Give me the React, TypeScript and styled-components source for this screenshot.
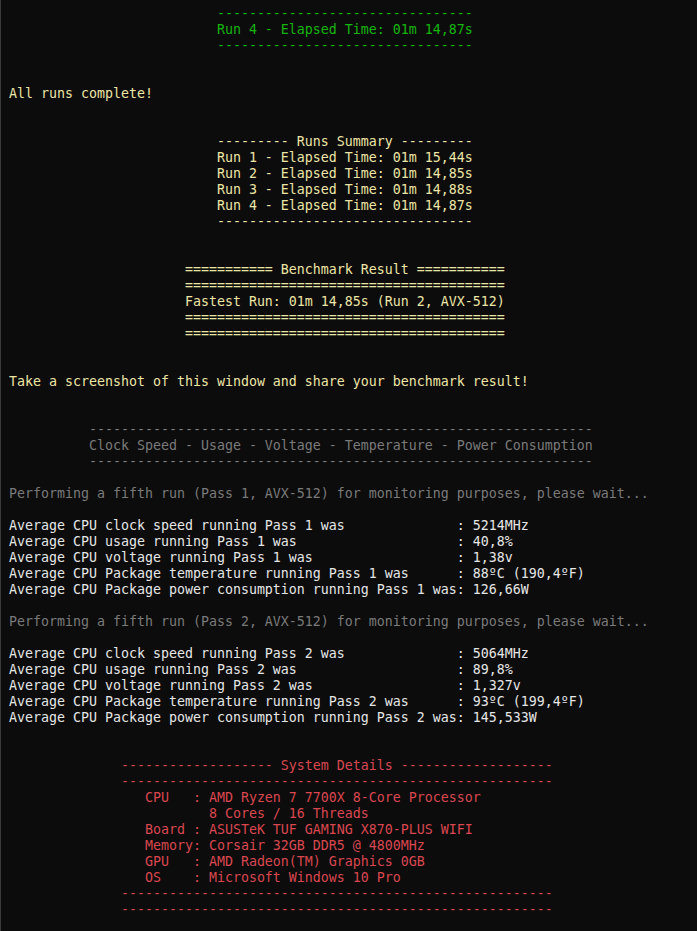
import React from "react";
import styled, { createGlobalStyle } from "styled-components";

type Tone = "green" | "yellow" | "gray" | "white" | "red";

const palette: Record<Tone, string> = {
  green: "#16b50e",
  yellow: "#ece5a6",
  gray: "#7a7a7a",
  white: "#e6e6e6",
  red: "#d9474f",
};

const Global = createGlobalStyle`
  html, body {
    margin: 0;
    padding: 0;
    background: #0c0c0c;
  }
`;

const Terminal = styled.main`
  box-sizing: border-box;
  width: 697px;
  height: 931px;
  overflow: hidden;
  background: #0c0c0c;
  border-left: 1px solid #3c3c3c;
  padding: 6px 0 0 8px;
  display: flex;
  flex-direction: column;
  font-family: "DejaVu Sans Mono", "Liberation Mono", monospace;
  font-size: 13.29px;
  line-height: 16px;
`;

const Line = styled.div<{ $tone: Tone }>`
  height: 16px;
  white-space: pre;
  color: ${(p) => palette[p.$tone]};
`;

const sp = (n: number) => " ".repeat(n);
const rep = (c: string, n: number) => c.repeat(n);

type Row = { text: string; tone: Tone };

const stat = (label: string, value: string): Row => ({
  text: label.padEnd(56, " ") + ": " + value,
  tone: "white",
});

const blank: Row = { text: "", tone: "white" };

const rows: Row[] = [
  { text: sp(26) + rep("-", 32), tone: "green" },
  { text: sp(26) + "Run 4 - Elapsed Time: 01m 14,87s", tone: "green" },
  { text: sp(26) + rep("-", 32), tone: "green" },
  blank,
  blank,
  { text: "All runs complete!", tone: "yellow" },
  blank,
  blank,
  { text: sp(26) + "--------- Runs Summary ---------", tone: "yellow" },
  { text: sp(26) + "Run 1 - Elapsed Time: 01m 15,44s", tone: "yellow" },
  { text: sp(26) + "Run 2 - Elapsed Time: 01m 14,85s", tone: "yellow" },
  { text: sp(26) + "Run 3 - Elapsed Time: 01m 14,88s", tone: "yellow" },
  { text: sp(26) + "Run 4 - Elapsed Time: 01m 14,87s", tone: "yellow" },
  { text: sp(26) + rep("-", 32), tone: "yellow" },
  blank,
  blank,
  { text: sp(22) + "=========== Benchmark Result ===========", tone: "yellow" },
  { text: sp(22) + rep("=", 40), tone: "yellow" },
  { text: sp(22) + "Fastest Run: 01m 14,85s (Run 2, AVX-512)", tone: "yellow" },
  { text: sp(22) + rep("=", 40), tone: "yellow" },
  { text: sp(22) + rep("=", 40), tone: "yellow" },
  blank,
  blank,
  { text: "Take a screenshot of this window and share your benchmark result!", tone: "yellow" },
  blank,
  blank,
  { text: sp(10) + rep("-", 63), tone: "gray" },
  { text: sp(10) + "Clock Speed - Usage - Voltage - Temperature - Power Consumption", tone: "gray" },
  { text: sp(10) + rep("-", 63), tone: "gray" },
  blank,
  { text: "Performing a fifth run (Pass 1, AVX-512) for monitoring purposes, please wait...", tone: "gray" },
  blank,
  stat("Average CPU clock speed running Pass 1 was", "5214MHz"),
  stat("Average CPU usage running Pass 1 was", "40,8%"),
  stat("Average CPU voltage running Pass 1 was", "1,38v"),
  stat("Average CPU Package temperature running Pass 1 was", "88ºC (190,4ºF)"),
  stat("Average CPU Package power consumption running Pass 1 was", "126,66W"),
  blank,
  { text: "Performing a fifth run (Pass 2, AVX-512) for monitoring purposes, please wait...", tone: "gray" },
  blank,
  stat("Average CPU clock speed running Pass 2 was", "5064MHz"),
  stat("Average CPU usage running Pass 2 was", "89,8%"),
  stat("Average CPU voltage running Pass 2 was", "1,327v"),
  stat("Average CPU Package temperature running Pass 2 was", "93ºC (199,4ºF)"),
  stat("Average CPU Package power consumption running Pass 2 was", "145,533W"),
  blank,
  blank,
  { text: sp(14) + "------------------- System Details -------------------", tone: "red" },
  { text: sp(14) + rep("-", 54), tone: "red" },
  { text: sp(17) + "CPU   : AMD Ryzen 7 7700X 8-Core Processor", tone: "red" },
  { text: sp(25) + "8 Cores / 16 Threads", tone: "red" },
  { text: sp(17) + "Board : ASUSTeK TUF GAMING X870-PLUS WIFI", tone: "red" },
  { text: sp(17) + "Memory: Corsair 32GB DDR5 @ 4800MHz", tone: "red" },
  { text: sp(17) + "GPU   : AMD Radeon(TM) Graphics 0GB", tone: "red" },
  { text: sp(17) + "OS    : Microsoft Windows 10 Pro", tone: "red" },
  { text: sp(14) + rep("-", 54), tone: "red" },
  { text: sp(14) + rep("-", 54), tone: "red" },
];

export default function App() {
  return (
    <>
      <Global />
      <Terminal>
        {rows.map((r, i) => (
          <Line key={i} $tone={r.tone}>
            {r.text}
          </Line>
        ))}
      </Terminal>
    </>
  );
}
